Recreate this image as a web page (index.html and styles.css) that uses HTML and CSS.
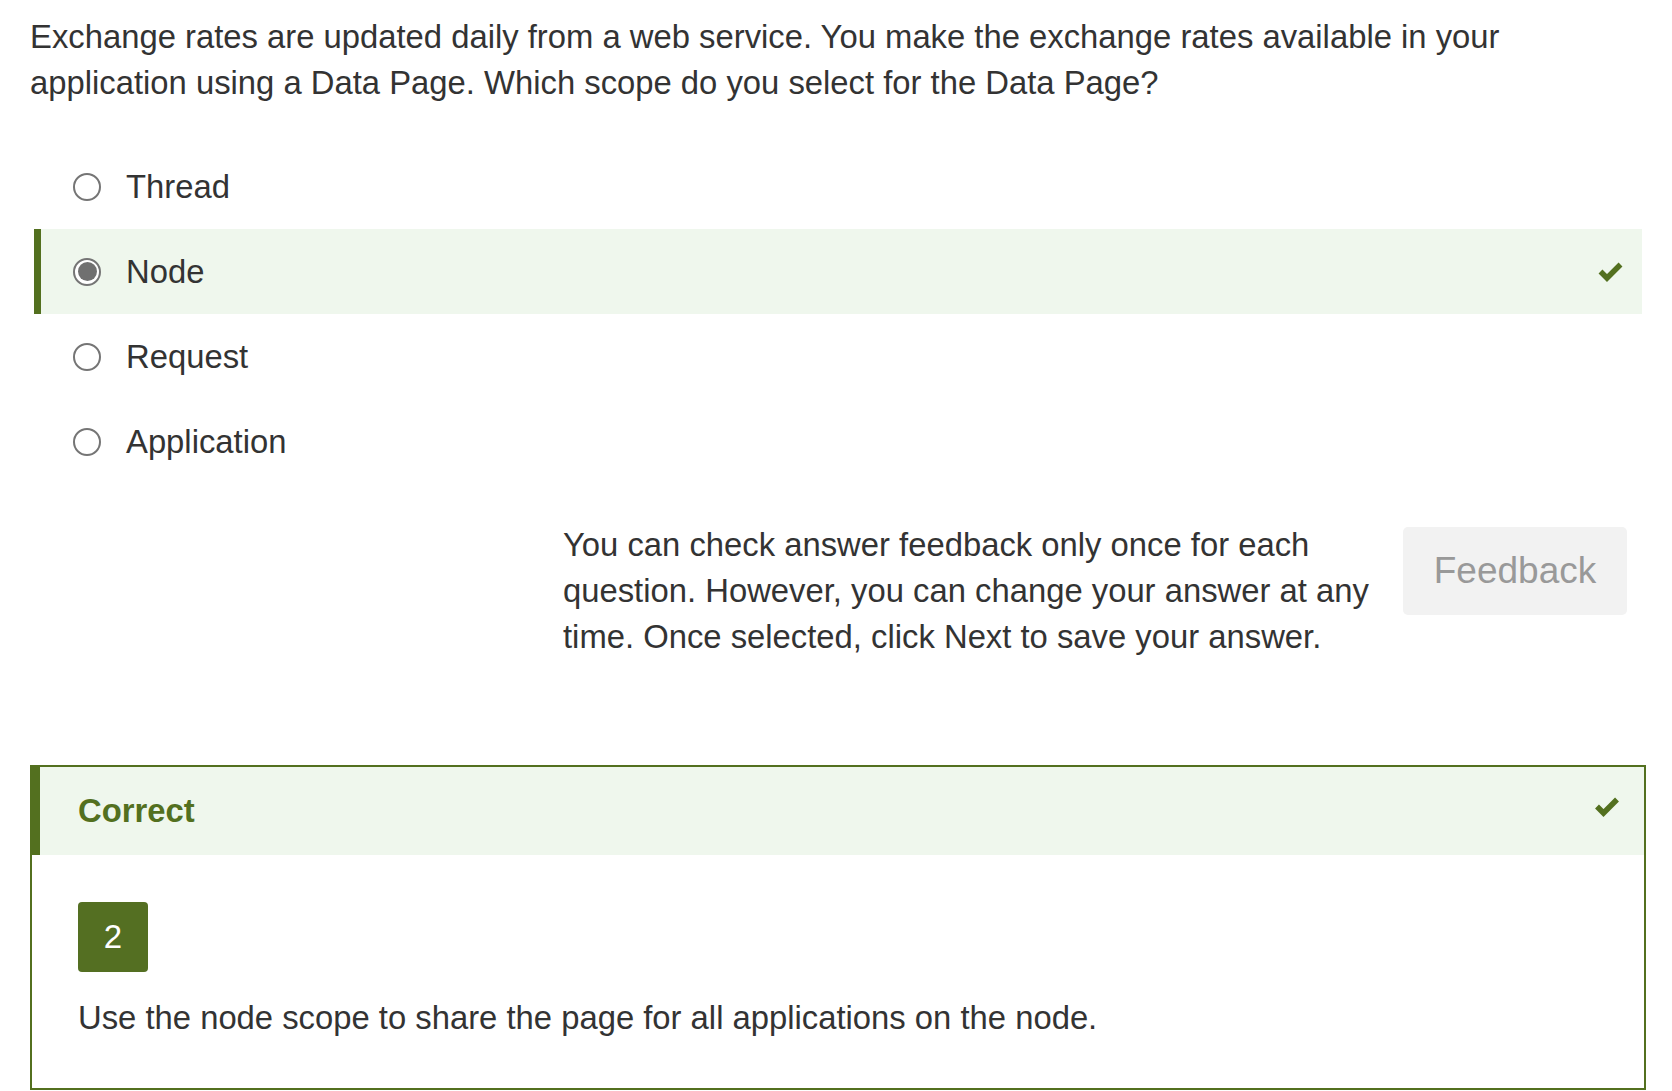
FILE: index.html
```html
<!DOCTYPE html>
<html lang="en">
<head>
<meta charset="utf-8">
<title>Question</title>
<link rel="stylesheet" href="styles.css">
</head>
<body>
<div class="page">
  <p class="question">Exchange rates are updated daily from a web service. You make the exchange rates available in your application using a Data Page. Which scope do you select for the Data Page?</p>

  <ul class="options">
    <li class="option"><span class="radio"></span><span class="label">Thread</span></li>
    <li class="option selected"><span class="radio checked"></span><span class="label">Node</span>
      <svg class="check" viewBox="0 0 25 21" width="25" height="21"><polyline points="2.5,10.5 9,17 22.5,3.5" fill="none" stroke="#53701f" stroke-width="5.5"/></svg>
    </li>
    <li class="option"><span class="radio"></span><span class="label">Request</span></li>
    <li class="option"><span class="radio"></span><span class="label">Application</span></li>
  </ul>

  <div class="feedback-row">
    <p class="feedback-text">You can check answer feedback only once for each question. However, you can change your answer at any time. Once selected, click Next to save your answer.</p>
    <button class="feedback-btn" type="button">Feedback</button>
  </div>

  <section class="result">
    <div class="result-head">
      <span class="result-title">Correct</span>
      <svg class="check head-check" viewBox="0 0 25 21" width="26" height="21"><polyline points="2.5,10.5 9,17 22.5,3.5" fill="none" stroke="#53701f" stroke-width="5.5"/></svg>
    </div>
    <div class="result-body">
      <div class="badge">2</div>
      <p class="explanation">Use the node scope to share the page for all applications on the node.</p>
    </div>
  </section>
</div>
</body>
</html>
```

FILE: styles.css
```css
html, body {
  margin: 0;
  padding: 0;
  background: #ffffff;
}

body {
  font-family: "Liberation Sans", Arial, sans-serif;
  font-size: 32.8px;
  line-height: 46px;
  color: #333333;
}

.page {
  padding: 14px 26px 0 30px;
}

.question {
  margin: 0;
}

.options {
  list-style: none;
  margin: 38px 4px 0 4px;
  padding: 0;
}

.option {
  display: flex;
  align-items: center;
  height: 85px;
  border-left: 7px solid transparent;
  padding: 0 19px 0 32px;
}

.option.selected {
  background: #eff7ed;
  border-left-color: #53701f;
}

.radio {
  flex: 0 0 auto;
  box-sizing: border-box;
  width: 28px;
  height: 28px;
  border: 2px solid #757575;
  border-radius: 50%;
  background: #ffffff;
  margin-right: 25px;
  display: flex;
  align-items: center;
  justify-content: center;
}

.radio.checked::after {
  content: "";
  width: 19px;
  height: 19px;
  border-radius: 50%;
  background: #707070;
}

.label {
  color: #333333;
}

.check {
  display: block;
  margin-left: auto;
}

.feedback-row {
  display: flex;
  align-items: flex-start;
  margin-top: 38px;
  padding-left: 533px;
}

.feedback-text {
  margin: 0;
  flex: 0 0 830px;
}

.feedback-btn {
  margin: 5px 0 0 10px;
  width: 224px;
  height: 88px;
  border: none;
  border-radius: 5px;
  background: #f2f2f2;
  color: #999999;
  font-family: "Liberation Sans", Arial, sans-serif;
  font-size: 37px;
  padding: 0;
}

.result {
  margin-top: 105px;
  border: 2px solid #53701f;
}

.result-head {
  display: flex;
  align-items: center;
  justify-content: space-between;
  height: 88px;
  background: #eff7ed;
  border-left: 8px solid #53701f;
  padding: 0 24px 0 38px;
}

.result-title {
  font-weight: bold;
  color: #53701f;
}

.head-check {
  margin-bottom: 9px;
}

.result-body {
  padding: 47px 46px 47px 46px;
}

.badge {
  width: 70px;
  height: 70px;
  border-radius: 4px;
  background: #546f22;
  color: #ffffff;
  display: flex;
  align-items: center;
  justify-content: center;
  font-size: 33px;
}

.explanation {
  margin: 23px 0 0 0;
}
```
